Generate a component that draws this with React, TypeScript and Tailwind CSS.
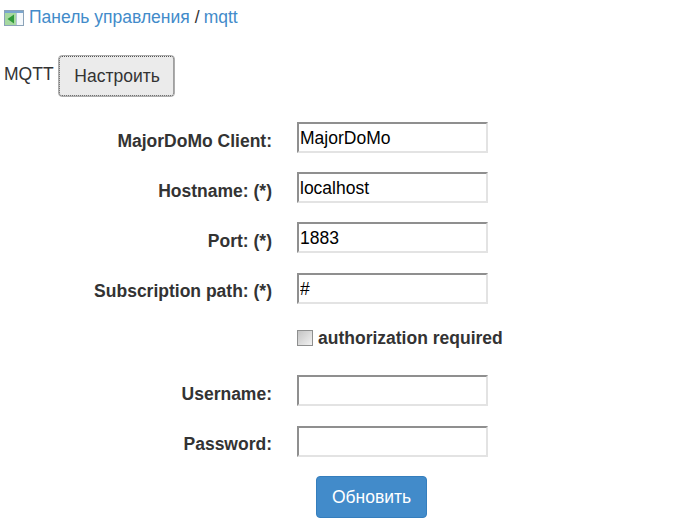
export default function App() {
  const rowClass = "flex items-center gap-[25px] h-[31px]"
  const labelClass = "w-[272px] text-right font-bold pt-[8px] leading-[25px]"
  const labelHighClass = "w-[272px] text-right font-bold pt-[6px] leading-[25px]"
  const inputClass =
    "w-[191px] h-[31px] bg-white border-2 border-t-[#8f8f8f] border-l-[#8f8f8f] border-r-[#e3e3e3] border-b-[#e3e3e3] pl-[1px] pr-[1px] pt-[2px] text-[17.5px] text-black outline-none"

  return (
    <div className="w-[676px] h-[532px] overflow-hidden bg-white text-[17.5px] text-[#333] font-['Liberation_Sans',Arial,sans-serif]">
      {/* Breadcrumb */}
      <div className="flex items-center pl-[4px] pt-[8px] h-[26px] leading-[18px]">
        <svg width="20" height="16" viewBox="0 0 20 16" className="mr-[5px] mt-[2px]">
          <rect x="0.5" y="0.5" width="19" height="15" fill="#f4f8fb" stroke="#8ba3b8" />
          <rect x="1" y="1" width="18" height="2" fill="#7ba6cf" />
          <rect x="1" y="3" width="11" height="12" fill="#a6d9a0" />
          <path d="M10 4.5 L3.5 9 L10 13.5 Z" fill="#2f9a3a" />
          <rect x="12" y="3" width="1" height="12" fill="#b4c6d6" />
        </svg>
        <a className="text-[#428bca]">Панель управления</a>
        <span className="ml-[5px] mr-[4px]">/</span>
        <a className="text-[#428bca]">mqtt</a>
      </div>

      {/* Title */}
      <div className="flex items-start pl-[4px] mt-[29px]">
        <span className="mt-[9px] leading-[20px]">MQTT</span>
        <button className="ml-[4px] pl-[2px] w-[117px] h-[42px] rounded-[4px] bg-[#ebebeb] border border-[#adadad] outline-1 outline-dotted outline-offset-[-2px] outline-[#555] text-[#333] text-[17.5px]">
          Настроить
        </button>
      </div>

      {/* Form */}
      <form className="flex flex-col mt-[25px]">
        <div className={rowClass}>
          <label className={labelClass}>MajorDoMo Client:</label>
          <input className={inputClass} defaultValue="MajorDoMo" />
        </div>
        <div className={`${rowClass} mt-[19px]`}>
          <label className={labelClass}>Hostname: (*)</label>
          <input className={inputClass} defaultValue="localhost" />
        </div>
        <div className={`${rowClass} mt-[19px]`}>
          <label className={labelClass}>Port: (*)</label>
          <input className={inputClass} defaultValue="1883" />
        </div>
        <div className={`${rowClass} mt-[20px]`}>
          <label className={labelHighClass}>Subscription path: (*)</label>
          <input className={inputClass} defaultValue="#" />
        </div>
        <div className="flex items-center ml-[297px] mt-[23px] h-[24px] font-bold">
          <input
            type="checkbox"
            className="appearance-none w-[16px] h-[16px] mr-[5px] -mt-[2px] border border-[#8e8f8f] bg-gradient-to-br from-[#c4c4c4] to-[#f2f2f2]"
          />
          <span className="-mt-[2px]">authorization required</span>
        </div>
        <div className={`${rowClass} mt-[24px]`}>
          <label className={labelClass}>Username:</label>
          <input className={inputClass} />
        </div>
        <div className={`${rowClass} mt-[20px]`}>
          <label className={labelHighClass}>Password:</label>
          <input className={inputClass} />
        </div>
        <div className="ml-[316px] mt-[19px]">
          <button type="button" className="w-[111px] h-[42px] rounded-[4px] bg-[#428bca] border border-[#357ebd] text-white text-[17.5px]">
            Обновить
          </button>
        </div>
      </form>
    </div>
  )
}
